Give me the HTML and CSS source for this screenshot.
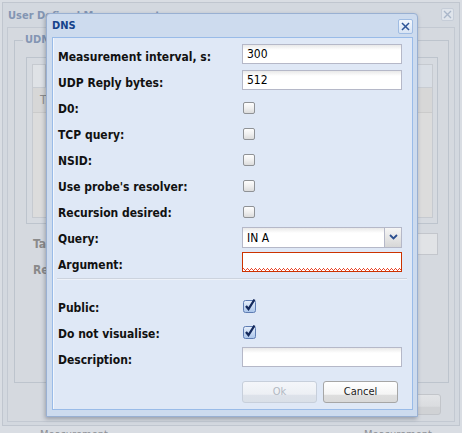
FILE: index.html
```html
<!DOCTYPE html>
<html>
<head>
<meta charset="utf-8">
<link rel="stylesheet" href="styles.css">
</head>
<body>
<div class="desk">
  <div class="bgwin">
    <div class="bgwin-head">
      <span class="bgwin-title">User Defined Measurement</span>
      <span class="bgwin-close"><svg width="11" height="11" viewBox="0 0 11 11"><path d="M2 2 L9 9 M9 2 L2 9" stroke="#a9b6c9" stroke-width="1.4"/></svg></span>
    </div>
    <div class="bgwin-body">
      <fieldset class="udm">
        <legend class="udm-legend">UDM</legend>
        <div class="grid">
          <div class="grid-inner">
            <div class="grid-tbar"><span class="grid-tbtn"></span></div>
            <div class="grid-head">T</div>
            <div class="grid-rows"></div>
          </div>
        </div>
        <div class="bg-row first"><span class="bg-label">Ta</span><span class="bg-input"></span></div>
        <div class="bg-row"><span class="bg-label">Re</span></div>
      </fieldset>
      <div class="bg-btnbar"><span class="bg-btn"></span></div>
    </div>
  </div>
  <div class="bg-footer"><span>Measurement</span><span>Measurement</span></div>

  <div class="dlg">
    <div class="dlg-head">
      <span class="dlg-title">DNS</span>
      <span class="dlg-close"><svg width="13" height="13" viewBox="0 0 13 13"><path d="M3.5 3.5 L9.5 9.5 M9.5 3.5 L3.5 9.5" stroke="#2f5597" stroke-width="1.5" stroke-linecap="square"/></svg></span>
    </div>
    <div class="dlg-body">
      <div class="row"><span class="lbl">Measurement interval, s:</span><span class="val"><span class="txt">300</span></span></div>
      <div class="row"><span class="lbl">UDP Reply bytes:</span><span class="val"><span class="txt">512</span></span></div>
      <div class="row"><span class="lbl">D0:</span><span class="val"><span class="cb"></span></span></div>
      <div class="row"><span class="lbl">TCP query:</span><span class="val"><span class="cb"></span></span></div>
      <div class="row"><span class="lbl">NSID:</span><span class="val"><span class="cb"></span></span></div>
      <div class="row"><span class="lbl">Use probe's resolver:</span><span class="val"><span class="cb"></span></span></div>
      <div class="row"><span class="lbl">Recursion desired:</span><span class="val"><span class="cb"></span></span></div>
      <div class="row"><span class="lbl">Query:</span><span class="val"><span class="combo"><span class="combo-text">IN A</span><span class="combo-trig"><svg width="9" height="6" viewBox="0 0 9 6"><path d="M1 1 L4.5 4.5 L8 1" stroke="#2c4f8f" stroke-width="1.8" fill="none"/></svg></span></span></span></div>
      <div class="row"><span class="lbl">Argument:</span><span class="val"><span class="txt invalid"></span></span></div>
      <div class="sep"></div>
      <div class="row"><span class="lbl">Public:</span><span class="val"><span class="cbc"><svg width="14" height="15" viewBox="0 0 14 15"><defs><linearGradient id="gb" x1="0" y1="0" x2="0" y2="1"><stop offset="0" stop-color="#e8f0fb"/><stop offset="1" stop-color="#a9c4ea"/></linearGradient></defs><rect x="0.5" y="2.5" width="12" height="12" rx="2" fill="url(#gb)" stroke="#5f7db3"/><path d="M3 8 L5.5 11 L11.5 1.5" stroke="#14295c" stroke-width="2.3" fill="none"/></svg></span></span></div>
      <div class="row"><span class="lbl">Do not visualise:</span><span class="val"><span class="cbc"><svg width="14" height="15" viewBox="0 0 14 15"><defs><linearGradient id="gb2" x1="0" y1="0" x2="0" y2="1"><stop offset="0" stop-color="#e8f0fb"/><stop offset="1" stop-color="#a9c4ea"/></linearGradient></defs><rect x="0.5" y="2.5" width="12" height="12" rx="2" fill="url(#gb2)" stroke="#5f7db3"/><path d="M3 8 L5.5 11 L11.5 1.5" stroke="#14295c" stroke-width="2.3" fill="none"/></svg></span></span></div>
      <div class="row"><span class="lbl">Description:</span><span class="val"><span class="txt"></span></span></div>
      <div class="btnbar">
        <span class="btn disabled">Ok</span>
        <span class="btn">Cancel</span>
      </div>
    </div>
  </div>
</div>
</body>
</html>
```

FILE: styles.css
```css
* { box-sizing: border-box; }
html, body { margin: 0; padding: 0; }
body {
  font-family: "DejaVu Sans Condensed", "DejaVu Sans", sans-serif;
  font-stretch: condensed;
  background: #d9dde3;
}
.desk {
  position: relative;
  width: 462px;
  height: 433px;
  overflow: hidden;
  background: #d9dde3;
}

/* background (masked) window */
.bgwin {
  margin: 2px 0 0 2px;
  width: 458px;
  height: 424px;
  border: 1px solid #c0c6cf;
  background: #d3d8df;
  display: flex;
  flex-direction: column;
}
.bgwin-head {
  height: 24px;
  flex: none;
  display: flex;
  align-items: center;
  justify-content: space-between;
  padding: 0 5px 0 5px;
}
.bgwin-title {
  font-weight: bold;
  font-size: 11px;
  color: #8395b3;
}
.bgwin-close {
  width: 13px;
  height: 13px;
  border: 1px solid #c6cdd8;
  border-radius: 2px;
  background: #dfe4eb;
  display: flex;
  align-items: center;
  justify-content: center;
  margin-top: -2px;
}
.bgwin-body {
  margin: 0 4px;
  height: 395px;
  border: 1px solid #c3c9d2;
  background: #d5d9df;
  padding: 0 5px 0 6px;
}
.udm {
  margin: 5px 0 0 0;
  height: 350px;
  border: 1px solid #bdc4cd;
  padding: 0 10px 0 11px;
}
.udm-legend {
  font-weight: bold;
  font-size: 11px;
  color: #8395b3;
  padding: 0 2px;
  margin-left: -3px;
  line-height: 14px;
}
.grid {
  margin-top: 10px;
  height: 167px;
  border: 1px solid #bdc4cd;
  background: #d6dae0;
  padding: 6px 4px 5px 5px;
}
.grid-inner {
  height: 154px;
  border: 1px solid #c6cad0;
  background: #dadada;
  display: flex;
  flex-direction: column;
}
.grid-tbar {
  height: 23px;
  background: #d9dee5;
  border-bottom: 1px solid #c8ccd2;
}
.grid-tbtn {
  display: block;
  width: 13px;
  height: 22px;
  border-right: 1px solid #c0c5cc;
  background: #dfe2e6;
}
.grid-head {
  height: 25px;
  border-bottom: 1px solid #cbcbcb;
  background: #d7d7d7;
  color: #8c8c8c;
  font-size: 12px;
  line-height: 25px;
  padding-left: 7px;
}
.grid-rows {
  flex: 1;
  background: #dcdcdc;
}
.bg-row {
  height: 22px;
  display: flex;
  align-items: center;
  justify-content: space-between;
  margin-top: 4px;
  padding-left: 7px;
}
.bg-row.first { margin-top: 9px; }
.bg-label {
  font-weight: bold;
  font-size: 12px;
  color: #8a8a8a;
}
.bg-input {
  width: 200px;
  height: 22px;
  border: 1px solid #c3c6cc;
  background: #e1e3e6;
}
.bg-btnbar {
  display: flex;
  justify-content: flex-end;
  padding-right: 8px;
  margin-top: 11px;
}
.bg-btn {
  width: 80px;
  height: 21px;
  border: 1px solid #c2c5ca;
  border-radius: 3px;
  background: linear-gradient(#e2e4e7, #dadcdf 60%, #d0d2d5 62%);
}
.bg-footer {
  display: flex;
  justify-content: space-between;
  padding: 2px 30px 0 40px;
  font-size: 11px;
  color: #8d9096;
  line-height: 14px;
}

/* DNS dialog */
.dlg {
  position: absolute;
  left: 46px;
  top: 13px;
  width: 372px;
  height: 404px;
  border: 1px solid #99b0d2;
  border-radius: 4px 4px 0 0;
  background: #cddbee;
  box-shadow: -1px 2px 4px rgba(40, 50, 70, 0.35);
  display: flex;
  flex-direction: column;
  padding: 0 4px 6px 5px;
}
.dlg-head {
  height: 23px;
  flex: none;
  display: flex;
  align-items: center;
  justify-content: space-between;
}
.dlg-title {
  font-weight: bold;
  font-size: 11px;
  color: #15428b;
}
.dlg-close {
  width: 15px;
  height: 15px;
  border: 1px solid #9fbce3;
  border-radius: 2px;
  background: linear-gradient(#f3f7fd, #d8e4f4);
  display: flex;
  align-items: center;
  justify-content: center;
  margin-top: 1px;
}
.dlg-body {
  flex: 1;
  border: 1px solid #99bbe8;
  background: #dfe8f6;
  box-shadow: inset 1px 0 0 #f2f6fc;
  padding: 4px 5px 0 5px;
}
.row {
  height: 26px;
  display: flex;
  align-items: center;
}
.lbl {
  width: 184px;
  flex: none;
  font-weight: bold;
  font-size: 12px;
  color: #111;
  line-height: 14px;
  margin-top: 4px;
}
.val {
  width: 160px;
  display: flex;
  align-items: center;
}
.txt {
  display: block;
  width: 160px;
  height: 20px;
  margin-top: -2px;
  border: 1px solid #b5b8c8;
  background: linear-gradient(#e9e9e9, #ffffff 5px);
  font-size: 12px;
  line-height: 18px;
  padding: 0 4px;
  color: #000;
}
.txt.invalid {
  border-color: #cc3300;
  background:
    linear-gradient(90deg, transparent 2px, #e9452a 2px 3px, transparent 3px) 0 100% / 4px 1px repeat-x,
    linear-gradient(90deg, transparent 1px, #e9452a 1px 2px, transparent 2px 3px, #e9452a 3px) 0 calc(100% - 1px) / 4px 1px repeat-x,
    linear-gradient(90deg, #e9452a 1px, transparent 1px) 0 calc(100% - 2px) / 4px 1px repeat-x,
    #fff;
}
.cb {
  display: block;
  width: 12px;
  height: 12px;
  margin-left: 1px;
  margin-top: 2px;
  border: 1px solid #8f9296;
  border-radius: 2px;
  background: linear-gradient(#fdfdfd, #f0f0f0 50%, #dcdcdc);
}
.cbc {
  display: flex;
  margin-left: 1px;
  margin-top: -2px;
}
.combo {
  width: 160px;
  height: 21px;
  border: 1px solid #b5b8c8;
  background: linear-gradient(#e9e9e9, #ffffff 5px);
  display: flex;
}
.combo-text {
  flex: 1;
  font-size: 12px;
  line-height: 20px;
  padding-left: 4px;
}
.combo-trig {
  width: 17px;
  border-left: 1px solid #b5b8c8;
  background: linear-gradient(#f6f6f6, #e6e6e6 50%, #d7d7d7);
  display: flex;
  align-items: center;
  justify-content: center;
}
.sep {
  height: 1px;
  background: #ccd3de;
  margin: 2px 0 14px -1px;
  box-shadow: 0 1px 0 #eef2f9;
}
.btnbar {
  display: flex;
  justify-content: flex-end;
  gap: 6px;
  margin-top: 10px;
  padding-right: 9px;
}
.btn {
  width: 75px;
  height: 22px;
  border: 1px solid #a6a6a6;
  border-radius: 3px;
  background: linear-gradient(#ffffff, #f4f4f4 62%, #dedede 64%, #d9d9d9);
  font-size: 11px;
  line-height: 20px;
  text-align: center;
  color: #222;
}
.btn.disabled {
  border-color: #c7cfdb;
  background: linear-gradient(#f4f6fa, #eceff4 62%, #dde2ea 64%, #dae0e8);
  color: #b3b9c3;
}
```
